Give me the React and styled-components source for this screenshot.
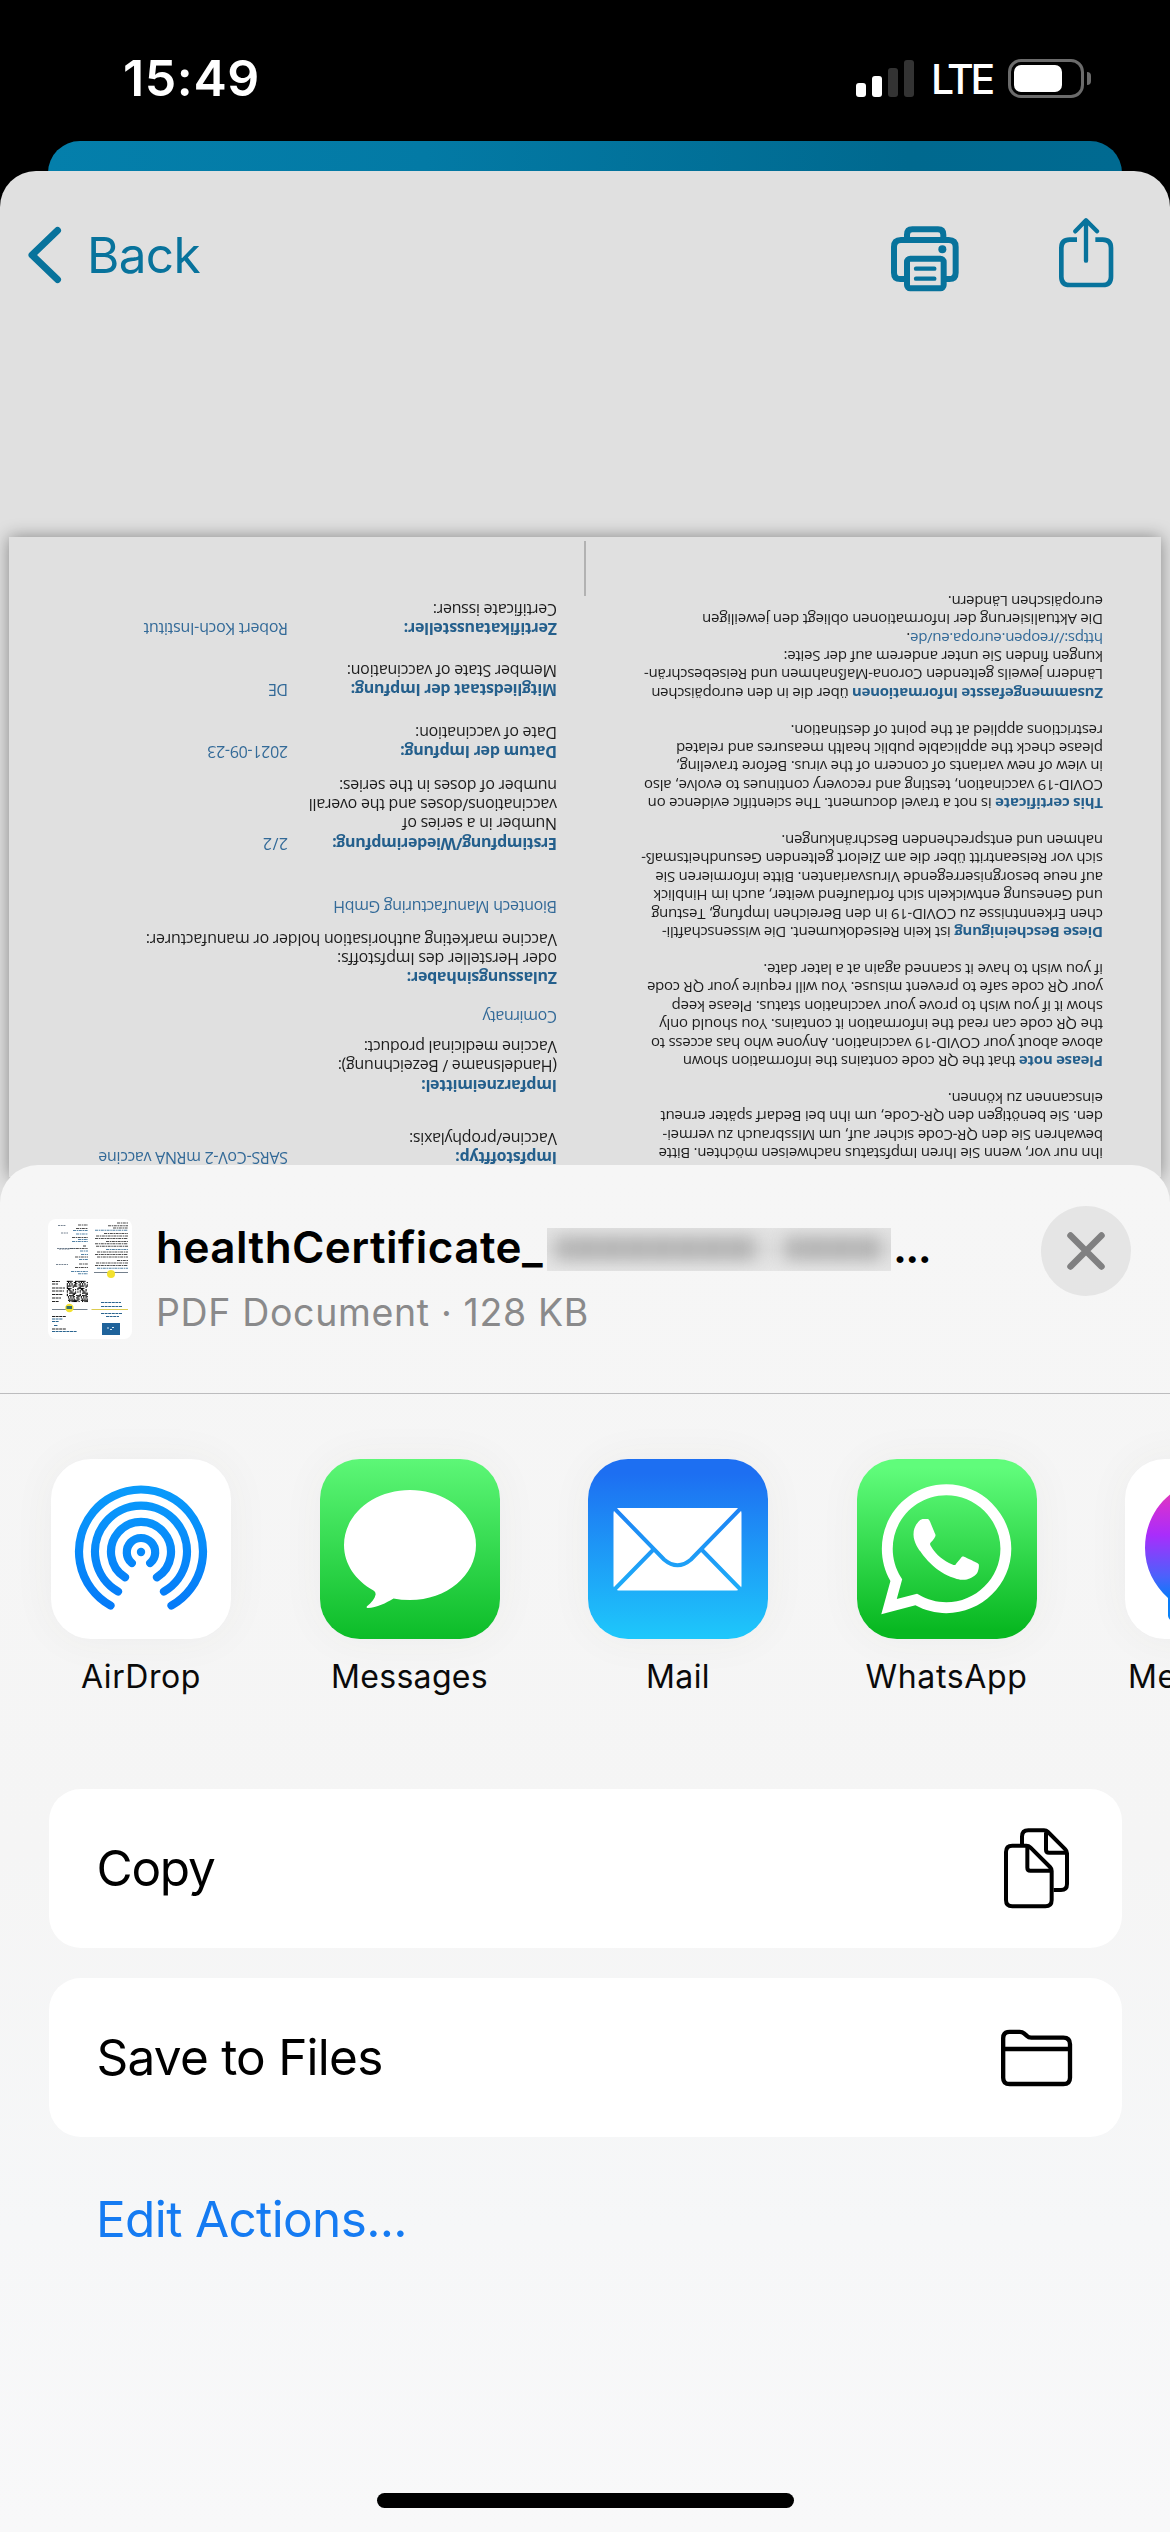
import React, { useLayoutEffect, useRef, useState } from "react";
import styled, { createGlobalStyle } from "styled-components";
import { FaWhatsapp } from "react-icons/fa";

const ui = `Inter, "Liberation Sans", sans-serif`;
const doc = `"Open Sans", "Noto Sans", sans-serif`;
const accent = "#08739c";

const Global = createGlobalStyle`
  * { box-sizing: border-box; }
  body { margin: 0; background: #000; }
`;

/* Text tracked so that it fills a given width. */
const Run = styled.span`
  display: inline-block;
  white-space: pre;
`;

function Fit({ width, children }) {
  const ref = useRef(null);
  const [tracking, setTracking] = useState(0);
  useLayoutEffect(() => {
    const natural = ref.current.getBoundingClientRect().width;
    const count = ref.current.textContent.length;
    setTracking((width - natural) / count);
  }, [width]);
  return (
    <Run ref={ref} style={{ letterSpacing: `${tracking}px` }}>
      {children}
    </Run>
  );
}

const Screen = styled.div`
  width: 1170px;
  height: 2532px;
  overflow: hidden;
  background: #000;
  display: flex;
  flex-direction: column;
  font-family: ${ui};
`;

/* ---------- status bar ---------- */
const StatusBar = styled.header`
  height: 141px;
  flex: none;
  padding: 15px 79px 0 123px;
  display: flex;
  align-items: center;
  color: #fff;
`;
const Clock = styled.div`
  flex: 1;
  font-size: 50px;
  font-weight: 600;
  line-height: 60px;
`;
const Bars = styled.div`
  display: flex;
  align-items: flex-end;
  gap: 6px;
  height: 37px;
`;
const Bar = styled.i`
  width: 10px;
  height: ${(p) => p.$h}px;
  border-radius: 3px;
  background: ${(p) => (p.$on ? "#fff" : "#333")};
`;
const Network = styled.div`
  margin: 2px 16px 0 17px;
  font-size: 41px;
  font-weight: 500;
  line-height: 50px;
`;
const Battery = styled.div`
  display: flex;
  align-items: center;
  gap: 3px;
`;
const Cell = styled.div`
  width: 76px;
  height: 39px;
  padding: 3px;
  border: 3px solid #6b6b6b;
  border-radius: 13px;
`;
const Charge = styled.div`
  width: 48px;
  height: 27px;
  border-radius: 7px;
  background: #fff;
`;
const Tip = styled.div`
  width: 4px;
  height: 13px;
  border-radius: 0 5px 5px 0;
  background: #6b6b6b;
`;

/* ---------- viewer ---------- */
const BehindCard = styled.div`
  height: 70px;
  flex: none;
  margin: 0 48px -40px;
  border-radius: 32px 32px 0 0;
  background: linear-gradient(90deg, #047fab 0%, #037aa5 35%, #00698f 80%, #006a91 100%);
`;
const Viewer = styled.main`
  position: relative;
  height: 1050px;
  flex: none;
  overflow: hidden;
  border-radius: 36px 36px 0 0;
  background: #e0e0e0;
`;
const NavBar = styled.nav`
  height: 168px;
  padding: 0 55px 0 25px;
  display: flex;
  align-items: center;
  color: ${accent};
`;
const BackButton = styled.div`
  flex: 1;
  display: flex;
  align-items: center;
  gap: 24px;
  font-size: 49.5px;
  line-height: 60px;
`;
const Tools = styled.div`
  display: flex;
  gap: 97px;
`;

const Sheet = styled.article`
  width: 1152px;
  height: 640px;
  margin: 198px 0 0 9px;
  transform: rotate(180deg);
  display: flex;
  align-items: flex-start;
  background: #e0e0e0;
  box-shadow: 0 0 16px rgba(0, 0, 0, 0.4);
  font-family: ${doc};
  color: #1c1c1c;
`;
const Prose = styled.section`
  width: 575px;
  padding: 14px 0 0 58px;
  font-size: 15px;
  line-height: 18.42px;
`;
const Fold = styled.i`
  width: 2px;
  height: 55px;
  margin-bottom: 4px;
  align-self: flex-end;
  background: #b2b2b2;
`;
const Fields = styled.section`
  flex: 1;
  padding: 9.8px 0 0 27px;
  font-size: 16px;
  line-height: 19.1px;
`;
const Field = styled.div`
  display: grid;
  grid-template-columns: ${(p) => (p.$wide ? "1fr" : "269px 1fr")};
  margin-top: ${(p) => p.$gap}px;
`;
const Line = styled.div`
  height: 1lh;
  white-space: nowrap;
`;
const Strong = styled.b`
  font-weight: 700;
  color: #245f8c;
`;
const Value = styled.span`
  color: #336a98;
`;

const prose = [
  [444.2, "ihn nur vor, wenn Sie Ihren Impfstatus nachweisen möchten. Bitte"],
  [440.2, "bewahren Sie den QR-Code sicher auf, um Missbrauch zu vermei-"],
  [442.4, "den. Sie benötigen den QR-Code, um ihn bei Bedarf später erneut"],
  [154.9, "einscannen zu können."],
  null,
  [419.9, " that the QR code contains the information shown", "Please note"],
  [451.8, "above about your COVID-19 vaccination. Anyone who has access to"],
  [443.5, "the QR code can read the information it contains. You should only"],
  [431.1, "show it if you wish to prove your vaccination status. Please keep"],
  [455.8, "your QR code safe to prevent misuse. You will require your QR code"],
  [339.5, "if you wish to have it scanned again at a later date."],
  null,
  [440.9, " ist kein Reisedokument. Die wissenschaftli-", "Diese Bescheinigung"],
  [451.5, "chen Erkenntnisse zu COVID-19 in den Bereichen Impfung, Testung"],
  [449.3, "und Genesung entwickeln sich fortlaufend weiter, auch im Hinblick"],
  [447.5, "auf neue besorgniserregende Virusvarianten. Bitte informieren Sie"],
  [461.7, "sich vor Reiseantritt über die am Zielort geltenden Gesundheitsmaß-"],
  [321.3, "nahmen und entsprechenden Beschränkungen."],
  null,
  [455.1, " is not a travel document. The scientific evidence on", "This certificate"],
  [458.8, "COVID-19 vaccination, testing and recovery continues to evolve, also"],
  [426.8, "in view of new variants of concern of the virus. Before traveling,"],
  [426.8, "please check the applicable public health measures and related"],
  [312.3, "restrictions applied at the point of destination."],
  null,
  [451.5, " über die in den europäischen", "Zusammengefasste Informationen"],
  [458.8, "Ländern jeweils geltenden Corona-Maßnahmen und Reisebeschrän-"],
  [319.2, "kungen finden Sie unter anderem auf der Seite:"],
  [196.3, ".", null, "https://reopen.europa.eu/de"],
  [400.6, "Die Aktualisierung der Informationen obliegt den jeweiligen"],
  [154.9, "europäischen Ländern."],
];

const fields = [
  { gap: 0, title: ["Impfstofftyp:", 101.4], lines: [["Vaccine/prophylaxis:", 147.7]], value: ["SARS-CoV-2 mRNA vaccine", 189.4] },
  { gap: 34.5, title: ["Impfarzneimittel:", 135.5], lines: [["(Handelsname / Bezeichnung):", 219], ["Vaccine medicinal product:", 193]] },
  { gap: 11.4, value: ["Comirnaty", 74.2], wide: true },
  { gap: 19.9, title: ["Zulassungsinhaber:", 150], lines: [["oder Hersteller des Impfstoffs:", 219.7], ["Vaccine marketing authorisation holder or manufacturer:", 411]], wide: true },
  { gap: 13.3, value: ["Biontech Manufacturing GmbH", 223.5], wide: true },
  { gap: 44.6, title: ["Erstimpfung/Wiederimpfung:", 224.6], lines: [["Number in a series of", 154.6], ["vaccinations/doses and the overall", 248], ["number of doses in the series:", 217.8]], value: ["2/2", 25.5] },
  { gap: 15.6, title: ["Datum der Impfung:", 156.5], lines: [["Date of vaccination:", 141.6]], value: ["2021-09-23", 80.5] },
  { gap: 23.8, title: ["Mitgliedstaat der Impfung:", 206], lines: [["Member State of vaccination:", 210]], value: ["DE", 19.4] },
  { gap: 22.5, title: ["Zertifikataussteller:", 153], lines: [["Certificate issuer:", 124]], value: ["Robert Koch-Institut", 144.3] },
];

function Certificate() {
  return (
    <Sheet>
      <Prose>
        {prose.map((row, i) => (
          <Line key={i}>
            {row && (
              <Fit width={row[0]}>
                {row[2] && <Strong>{row[2]}</Strong>}
                {row[3] && <Value>{row[3]}</Value>}
                {row[1]}
              </Fit>
            )}
          </Line>
        ))}
      </Prose>
      <Fold />
      <Fields>
        {fields.map((f, i) => (
          <Field key={i} $gap={f.gap} $wide={f.wide}>
            {f.title && (
              <div>
                <Line><Strong><Fit width={f.title[1]}>{f.title[0]}</Fit></Strong></Line>
                {f.lines.map(([text, w]) => (
                  <Line key={text}><Fit width={w}>{text}</Fit></Line>
                ))}
              </div>
            )}
            {f.value && (
              <Line><Value><Fit width={f.value[1]}>{f.value[0]}</Fit></Value></Line>
            )}
          </Field>
        ))}
      </Fields>
    </Sheet>
  );
}

const PrinterIcon = () => (
  <svg width="70" height="80" viewBox="147 75 210 240" fill="none" stroke={accent} strokeWidth="18">
    <path d="M198 141V134Q198 118 214 118H291Q307 118 307 134V141" />
    <path d="M190 267H178Q159 267 159 248V171Q159 150 180 150H323Q344 150 344 171V248Q344 267 325 267H315" />
    <rect x="198" y="206" width="110" height="89" rx="10" />
    <path d="M225 236H280M225 266H280" strokeWidth="13" strokeLinecap="round" />
    <circle cx="304" cy="178" r="12" fill={accent} stroke="none" />
  </svg>
);

const ShareIcon = () => (
  <svg width="58" height="80" viewBox="648 75 174 240" fill="none" stroke={accent} strokeWidth="14">
    <path d="M708 149H686Q661 149 661 174V260Q661 285 686 285H785Q810 285 810 260V174Q810 149 785 149H763" />
    <path d="M735 212V93M703 124L735 91L768 124" strokeLinecap="round" strokeLinejoin="round" strokeWidth="13" />
  </svg>
);

/* ---------- share sheet ---------- */
const ShareSheet = styled.section`
  position: relative;
  flex: 1;
  margin-top: -56px;
  border-radius: 38px 38px 0 0;
  background: linear-gradient(180deg, #f6f6f6 0%, #f5f5f5 50%, #f6f7f8 78%, #f8f8f9 100%);
  display: flex;
  flex-direction: column;
  overflow: hidden;
`;
const FileHeader = styled.div`
  height: 229px;
  padding: 0 39px 0 48px;
  display: flex;
  align-items: center;
  border-bottom: 1px solid #bcbcbe;
`;
const Thumb = styled.div`
  width: 84px;
  height: 120px;
  margin-right: 24px;
  border-radius: 8px;
  overflow: hidden;
  background: #fff;
`;
const FileInfo = styled.div`
  flex: 1;
  padding-top: 1px;
`;
const FileName = styled.div`
  height: 65px;
  display: flex;
  align-items: center;
  font-size: 44px;
  font-weight: 600;
  line-height: 65px;
`;
const FileMeta = styled.div`
  height: 65px;
  font-size: 37.5px;
  line-height: 65px;
  color: #8a8a8b;
`;
const Redaction = styled.div`
  width: 344px;
  height: 43px;
  margin: 4px 2px 0 4px;
  padding: 9px 10px 11px;
  overflow: hidden;
  display: flex;
  gap: 30px;
  background: linear-gradient(180deg, #e3e3e3, #dcdcdc 50%, #e6e6e6);
`;
const Smudge = styled.i`
  flex: ${(p) => p.$grow};
  filter: blur(8px);
  background: repeating-linear-gradient(97deg, #b0b0b0 0 12px, #bdbdbd 17px, #b2b2b2 25px);
`;
const CloseButton = styled.div`
  width: 90px;
  height: 90px;
  margin-bottom: 56px;
  border-radius: 50%;
  background: #e5e5e5;
  display: grid;
  place-items: center;
`;
const Apps = styled.div`
  height: 395px;
  flex: none;
  padding: 65px 0 0 51px;
  display: flex;
  gap: 88.5px;
`;
const AppItem = styled.div`
  width: 180px;
  flex: none;
  display: flex;
  flex-direction: column;
  align-items: center;
  gap: 18px;
`;
const AppTile = styled.div`
  width: 180px;
  height: 180px;
  border-radius: 40px;
  overflow: hidden;
  display: grid;
  place-items: center;
  background: ${(p) => p.$bg};
  box-shadow: 0 0 44px rgba(70, 70, 50, 0.05);
  color: #fff;
`;
const AppLabel = styled.div`
  font-size: 32px;
  line-height: 40px;
  color: #0a0a0a;
`;
const Actions = styled.div`
  padding: 0 48.5px;
  display: flex;
  flex-direction: column;
  gap: 30px;
`;
const Action = styled.div`
  height: 159px;
  padding: 0 49px 2px 48px;
  border-radius: 32px;
  background: #fff;
  display: flex;
  align-items: center;
  justify-content: space-between;
  font-size: 49.5px;
  color: #000;

  svg {
    margin-top: 2px;
  }
`;
const EditActions = styled.div`
  height: 164px;
  padding-left: 96px;
  font-size: 49.5px;
  line-height: 164px;
  color: #157bf2;
`;
const HomeIndicator = styled.div`
  width: 417px;
  height: 15px;
  flex: none;
  margin: auto auto 24px;
  border-radius: 8px;
  background: #000;
`;

const CopyIcon = () => (
  <svg width="72" height="85" viewBox="120 80 216 255" fill="none" stroke="#000" strokeWidth="12" strokeLinejoin="round">
    <path d="M183 134V112Q183 93 202 93H249Q256 93 261 98L313 150Q318 155 318 162V254Q318 272 300 272H278M255 95V151Q255 160 264 160H316" />
    <path d="M154 139H196Q203 139 208 144L267 203Q272 208 272 215V302Q272 321 253 321H154Q135 321 135 302V158Q135 139 154 139ZM199 141V205Q199 214 208 214H270" />
  </svg>
);

const FolderIcon = () => (
  <svg width="72" height="62" viewBox="120 680 216 186" fill="none" stroke="#000" strokeWidth="13" strokeLinejoin="round">
    <path d="M146 694.500H176Q184 694.500 189 699L197 706Q203 712 211 712H307Q327 712 327 732V832Q327 851 307 851H146Q126.500 851 126.500 832V714Q126.500 694.500 146 694.500ZM127 746H327" />
  </svg>
);

const AirDropArt = () => (
  <svg width="180" height="180" fill="none" stroke="url(#air)" strokeWidth="8.2" strokeLinecap="round">
    <defs>
      <linearGradient id="air" gradientUnits="userSpaceOnUse" x1="0" y1="27" x2="0" y2="150">
        <stop offset="0" stopColor="#0a9bfb" />
        <stop offset="1" stopColor="#057af8" />
      </linearGradient>
    </defs>
    <path d="M59.500 146.500A62 62 0 1 1 120.500 146.500" />
    <path d="M67 132.500A46 46 0 1 1 113 132.500" />
    <path d="M74 118.300A30 30 0 1 1 106 118.300" />
    <path d="M80.800 104A14.200 14.200 0 1 1 99.200 104" />
    <circle cx="90" cy="93" r="4.200" fill="url(#air)" stroke="none" />
  </svg>
);

const MessagesArt = () => (
  <svg width="180" height="180" fill="#fff">
    <path d="M90 31C126.500 31 156 55.500 156 86S126.500 141 90 141Q81 141 73.500 139.400C66 144 57 148.500 47.600 149C46.500 149 46.300 148 47 147.300C51.500 143.500 55 139.500 55.600 135.500Q55.800 133 53.500 131.500C35.500 121.500 24 105 24 86C24 55.500 53.500 31 90 31Z" />
  </svg>
);

const MailArt = () => (
  <svg width="180" height="180">
    <mask id="env">
      <rect x="25.500" y="49" width="128" height="82.500" rx="5" fill="#fff" />
      <g fill="none" stroke="#000" strokeWidth="4">
        <path d="M25 48L76 100.500Q89.500 112 103 100.500L154 48" />
        <path d="M25 132L65 91M154 132L114 91" />
      </g>
    </mask>
    <rect width="180" height="180" fill="#fff" mask="url(#env)" />
  </svg>
);

const MessengerArt = () => (
  <svg width="180" height="180">
    <defs>
      <linearGradient id="msgr" gradientUnits="userSpaceOnUse" x1="0" y1="20" x2="0" y2="160">
        <stop offset="0" stopColor="#f0409a" />
        <stop offset="0.2" stopColor="#cf30d8" />
        <stop offset="0.4" stopColor="#a92dfb" />
        <stop offset="0.7" stopColor="#4a62fb" />
        <stop offset="0.85" stopColor="#087bfa" />
        <stop offset="1" stopColor="#0a84f8" />
      </linearGradient>
    </defs>
    <path d="M90 20C50 20 20 50 20 89C20 109 29 126 43 139V157Q44 163 50 160L66 153Q78 157 90 157C130 157 160 127 160 89S130 20 90 20Z" fill="url(#msgr)" />
  </svg>
);

/* Rows of tiny print on the page preview: [right edge, y, length, colour]. */
const leftPrint = [
  [40, 6, 10], [40, 9.5, 12], [40, 11.5, 15, 1], [40, 15, 12, 1], [40, 18.500, 16], [40, 20.500, 10, 1],
  [40, 22.500, 16, 1], [38, 27, 3], [40, 29.500, 18], [40, 32, 8, 1], [40, 35.500, 7, 1], [40, 38, 13],
  [40, 40.500, 9, 1], [40, 45, 9], [40, 48.500, 13], [40, 52.500, 17, 1], [40, 54.800, 10, 1],
];
const rightPrint = [
  [80, 4, 11], [80, 6.8, 20], [80, 9, 15], [80, 11.300, 33, 1], [80, 14.500, 24], [80, 17, 32], [80, 19.500, 33],
  [80, 22.500, 22], [80, 24.800, 33], [80, 27.300, 32], [80, 30.500, 22, 1], [80, 33, 31], [80, 35.500, 33],
  [80, 38, 31], [80, 41.500, 11], [80, 44, 32], [80, 46.500, 33], [80, 49.300, 31, 1],
];
const modules = Array.from({ length: 324 }, (_, i) => i).filter((i) => {
  const x = i % 18;
  const y = (i / 18) | 0;
  return (x * x * 3 + y * 7 + x * y * 5 + ((y * y) >> 1)) % 11 < 6;
});

const PreviewArt = () => (
  <svg width="84" height="120">
    {[...leftPrint, ...rightPrint].map(([x, y, w, blue], i) => (
      <path key={i} d={`M${x - w} ${y}H${x}`} stroke={blue ? "#29648f" : "#222"} strokeWidth="1.1" strokeDasharray="3 .7 1.500 .6" opacity=".8" />
    ))}
    <path d="M10 6.500H18M13 14H20M11 30H22M9 29.500H28M8 45.500H20" stroke="#567" strokeWidth=".8" strokeDasharray="2 .7" />
    <path d="M46 53.500H80M4 90.500H39.500" stroke="#74808c" strokeWidth="1.200" />
    <path d="M43.500 90.500H80" stroke="#dccb50" strokeWidth="1.200" />
    <circle cx="63" cy="55" r="4" fill="#f3e12e" />
    <circle cx="21.400" cy="89" r="4.200" fill="#f3e12e" />
    <rect x="18.500" y="87" width="5.500" height="3" fill="#356d6a" />
    {modules.map((i) => (
      <rect key={i} x={18.8 + (i % 18) * 1.17} y={61.8 + ((i / 18) | 0) * 1.18} width="1.17" height="1.18" fill="#000" />
    ))}
    <path d="M4 62.500H12M4 65H10M4 69H17M4 72H16M4 75.500H15M4 79H13M4 82.500H11" stroke="#222" strokeWidth="1" strokeDasharray="3 .6" />
    <path d="M4 97.500H18M4 110H18" stroke="#222" strokeWidth="1" strokeDasharray="3 .6" />
    <path d="M4 100H15M4 102.500H11M6 106.500H10M4 112.500H29M53 83.500H73M53 87.500H74M53 94.500H74M58 97.500H71" stroke="#29648f" strokeWidth="1" strokeDasharray="3 .6" />
    <rect x="54" y="104" width="18" height="12" fill="#1f639b" />
    <path d="M59 109H61M62 110.500H64M64 108.500H66" stroke="#d8e8f4" strokeWidth="1" />
  </svg>
);

const apps = [
  { name: "AirDrop", w: 120, bg: "#fff", art: <AirDropArt /> },
  { name: "Messages", w: 157, bg: "linear-gradient(#5df777, #0cbc28)", art: <MessagesArt /> },
  { name: "Mail", w: 64, bg: "linear-gradient(#1d6ff2 8%, #1ec8fb)", art: <MailArt /> },
  { name: "WhatsApp", w: 162, bg: "linear-gradient(#60fc7b 5%, #08b821 95%)", art: <FaWhatsapp size={148.6} /> },
  { name: "Messenger", w: 174, bg: "#fff", art: <MessengerArt /> },
];

export default function App() {
  return (
    <Screen>
      <Global />
      <StatusBar>
        <Clock><Fit width={137}>15:49</Fit></Clock>
        <Bars>
          <Bar $h={14} $on />
          <Bar $h={21} $on />
          <Bar $h={29} />
          <Bar $h={37} />
        </Bars>
        <Network><Fit width={61}>LTE</Fit></Network>
        <Battery>
          <Cell><Charge /></Cell>
          <Tip />
        </Battery>
      </StatusBar>
      <BehindCard />
      <Viewer>
        <NavBar>
          <BackButton>
            <svg width="38" height="60" viewBox="0 0 38 60" fill="none" stroke={accent} strokeWidth="7" strokeLinecap="round" strokeLinejoin="round">
              <path d="M32.500 5.500L7 30L32.500 54.500" />
            </svg>
            <Fit width={113}>Back</Fit>
          </BackButton>
          <Tools>
            <PrinterIcon />
            <ShareIcon />
          </Tools>
        </NavBar>
        <Certificate />
      </Viewer>
      <ShareSheet>
        <FileHeader>
          <Thumb><PreviewArt /></Thumb>
          <FileInfo>
            <FileName>
              <Fit width={387}>healthCertificate_</Fit>
              <Redaction>
                <Smudge $grow={2.1} />
                <Smudge $grow={1} />
              </Redaction>
              <Fit width={37}>...</Fit>
            </FileName>
            <FileMeta><Fit width={433}>PDF Document · 128 KB</Fit></FileMeta>
          </FileInfo>
          <CloseButton>
            <svg width="40" height="40" stroke="#808081" strokeWidth="6.500" strokeLinecap="round">
              <path d="M4.500 4.500L35.500 35.500M35.500 4.500L4.500 35.500" />
            </svg>
          </CloseButton>
        </FileHeader>
        <Apps>
          {apps.map((a) => (
            <AppItem key={a.name}>
              <AppTile $bg={a.bg}>{a.art}</AppTile>
              <AppLabel><Fit width={a.w}>{a.name}</Fit></AppLabel>
            </AppItem>
          ))}
        </Apps>
        <Actions>
          <Action><Fit width={118}>Copy</Fit><CopyIcon /></Action>
          <Action><Fit width={286}>Save to Files</Fit><FolderIcon /></Action>
        </Actions>
        <EditActions><Fit width={311}>Edit Actions...</Fit></EditActions>
        <HomeIndicator />
      </ShareSheet>
    </Screen>
  );
}
